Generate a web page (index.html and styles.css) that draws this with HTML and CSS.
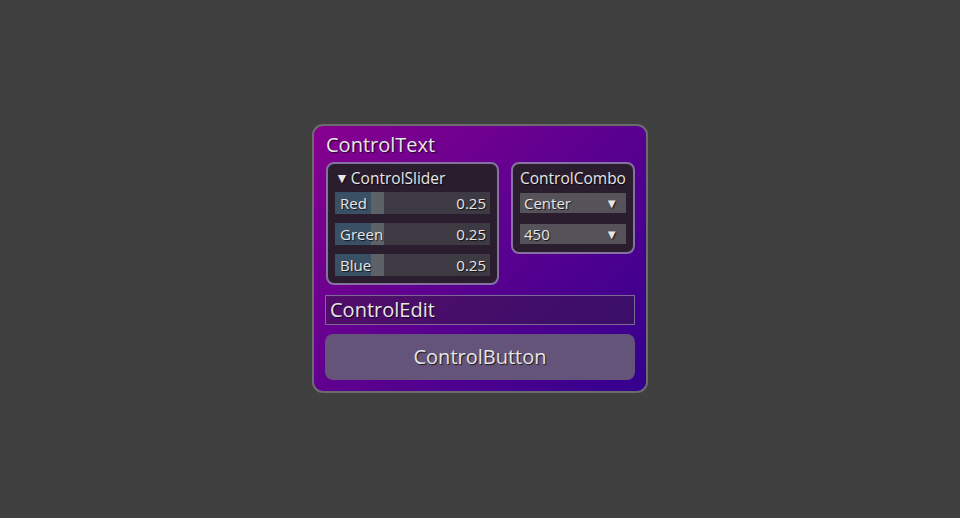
FILE: index.html
```html
<!DOCTYPE html>
<html>
<head>
<meta charset="utf-8">
<link rel="stylesheet" href="styles.css">
</head>
<body>
<div class="stage">
  <div class="panel">
    <div class="title">ControlText</div>
    <div class="row">
      <div class="box slider-box">
        <div class="box-head"><span class="tri">▼</span>ControlSlider</div>
        <div class="slider"><div class="fill"></div><div class="grab"></div><span class="lbl">Red</span><span class="val">0.25</span></div>
        <div class="slider"><div class="fill"></div><div class="grab"></div><span class="lbl">Green</span><span class="val">0.25</span></div>
        <div class="slider"><div class="fill"></div><div class="grab"></div><span class="lbl">Blue</span><span class="val">0.25</span></div>
      </div>
      <div class="box combo-box">
        <div class="box-head combo-head">ControlCombo</div>
        <div class="combo"><span>Center</span><span class="arrow">▼</span></div>
        <div class="combo"><span>450</span><span class="arrow">▼</span></div>
      </div>
    </div>
    <div class="edit">ControlEdit</div>
    <div class="button">ControlButton</div>
  </div>
</div>
</body>
</html>
```
FILE: styles.css
```css
html, body {
  margin: 0;
  padding: 0;
  background: #404040;
  width: 960px;
  height: 518px;
  overflow: hidden;
  font-family: "Open Sans", "Noto Sans", sans-serif;
  color: #e6e6e6;
}
.stage {
  padding-top: 124px;
  padding-left: 312px;
}
.panel {
  box-sizing: border-box;
  width: 336px;
  height: 269px;
  border: 2px solid #6c6c6c;
  border-radius: 11px;
  background: linear-gradient(135deg, #88008f 0%, #5c0090 50%, #34008e 100%);
  padding: 5px 11px 0 11px;
  text-shadow: 1px 1px 1px rgba(0,0,0,0.75);
}
.title {
  font-size: 20px;
  line-height: 27px;
  height: 27px;
  padding-left: 1px;
}
.row {
  display: flex;
  gap: 12px;
  margin-top: 4px;
  margin-left: 1px;
}
.box {
  box-sizing: border-box;
  border: 2px solid #8672a0;
  border-radius: 8px;
  background: #2a1e2e;
}
.slider-box {
  width: 173px;
  height: 123px;
  padding: 4px 7px 0 7px;
}
.combo-box {
  width: 124px;
  height: 92px;
  padding: 4px 7px 0 7px;
}
.box-head {
  font-size: 15.5px;
  line-height: 20px;
  height: 20px;
  display: flex;
  align-items: center;
  margin-bottom: 4px;
}
.combo-head {
  margin-bottom: 5px;
  padding-left: 0;
}
.tri {
  font-size: 14px;
  margin-right: 2px;
  margin-left: 0;
}
.slider {
  position: relative;
  height: 22px;
  background: #3e3a43;
  margin-bottom: 9px;
  font-size: 15px;
  line-height: 22px;
}
.fill {
  position: absolute;
  left: 0;
  top: 0;
  width: 36px;
  height: 22px;
  background: #3a5064;
}
.grab {
  position: absolute;
  left: 36px;
  top: 0;
  width: 13px;
  height: 22px;
  background: #5d6268;
}
.lbl {
  position: relative;
  padding-left: 5px;
}
.val {
  position: absolute;
  right: 4px;
  top: 0;
}
.combo {
  height: 20px;
  background: #56525a;
  display: flex;
  justify-content: space-between;
  align-items: center;
  padding: 0 8px 0 4px;
  font-size: 15px;
  line-height: 20px;
  margin-bottom: 11px;
}
.arrow {
  font-size: 13px;
}
.edit {
  box-sizing: border-box;
  margin-top: 10px;
  width: 310px;
  height: 30px;
  border: 1px solid #7c6a92;
  background: rgba(50, 30, 60, 0.45);
  font-size: 20px;
  line-height: 27px;
  padding-left: 4px;
}
.button {
  margin-top: 9px;
  width: 310px;
  height: 46px;
  border-radius: 8px;
  background: #64547a;
  font-size: 20px;
  line-height: 46px;
  text-align: center;
}
```
